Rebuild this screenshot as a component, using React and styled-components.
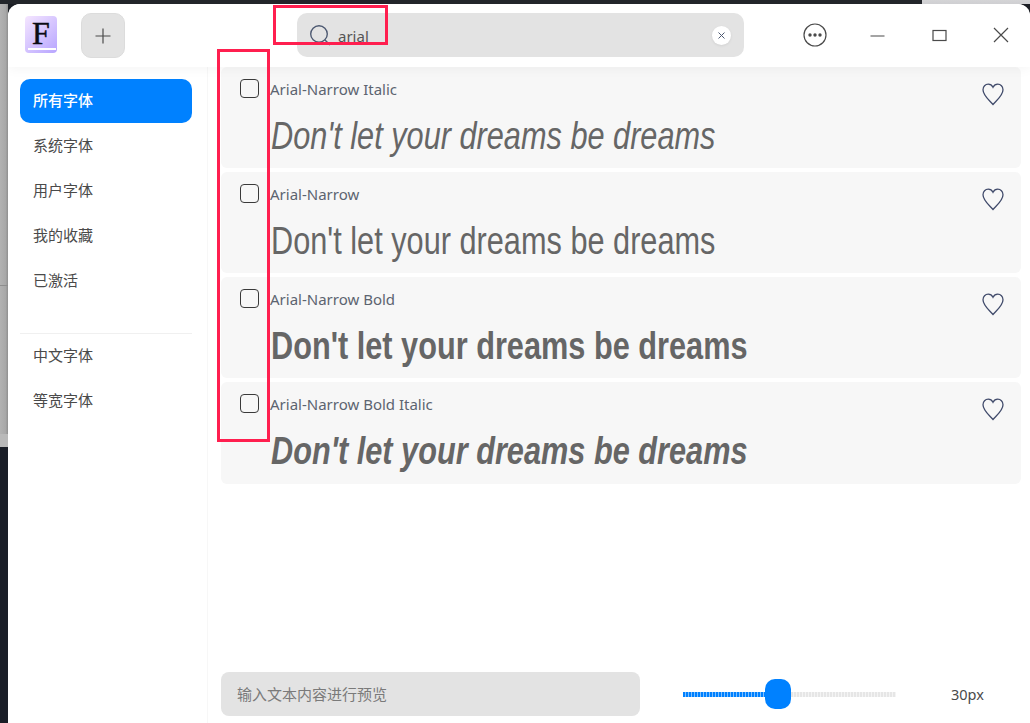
import React from 'react'
import styled, { createGlobalStyle } from 'styled-components'

const GlobalStyle = createGlobalStyle`
  html, body { margin: 0; padding: 0; height: 100%; overflow: hidden; }
  body { font-family: 'Noto Sans', 'Noto Sans CJK SC', sans-serif; background: #1b1e24; }
  * { box-sizing: border-box; }
`

const fonts = [
  { id: 1, name: 'Arial-Narrow Italic', italic: true },
  { id: 2, name: 'Arial-Narrow' },
  { id: 3, name: 'Arial-Narrow Bold', bold: true },
  { id: 4, name: 'Arial-Narrow Bold Italic', bold: true, italic: true },
]

export default function App() {
  return (
    <Page>
      <GlobalStyle />
      <Window>
        <TitleBar>
          <Logo>
            <LogoLetter>F</LogoLetter>
          </Logo>
          <AddButton>
            <svg width="16" height="16" viewBox="0 0 16 16" fill="none" stroke="#4a4a4a" strokeWidth="1.2">
              <path d="M8 0.5V15.5M0.5 8H15.5" />
            </svg>
          </AddButton>
          <SearchBox>
            <svg width="23" height="23" viewBox="0 0 23 23" fill="none" stroke="#4e5a72" strokeWidth="1.4">
              <circle cx="10" cy="10" r="8.3" />
              <path d="M16 16L21 21" />
            </svg>
            <SearchText>arial</SearchText>
            <ClearButton>
              <svg width="7" height="7" viewBox="0 0 7 7" fill="none" stroke="#4e5a72" strokeWidth="1">
                <path d="M0.5 0.5L6.5 6.5M6.5 0.5L0.5 6.5" />
              </svg>
            </ClearButton>
          </SearchBox>
          <WindowButtons>
            <WindowButton>
              <svg width="24" height="24" viewBox="0 0 24 24" fill="none">
                <circle cx="12" cy="12" r="11" stroke="#4a4a4a" strokeWidth="1.2" />
                <circle cx="7" cy="12" r="1.7" fill="#4a4a4a" />
                <circle cx="12" cy="12" r="1.7" fill="#4a4a4a" />
                <circle cx="17" cy="12" r="1.7" fill="#4a4a4a" />
              </svg>
            </WindowButton>
            <WindowButton>
              <svg width="15" height="15" viewBox="0 0 15 15" fill="none" stroke="#4a4a4a" strokeWidth="1.2">
                <path d="M0.5 8H14.5" />
              </svg>
            </WindowButton>
            <WindowButton>
              <svg width="15" height="15" viewBox="0 0 15 15" fill="none" stroke="#4a4a4a" strokeWidth="1.2">
                <rect x="1" y="2.5" width="13" height="10" />
              </svg>
            </WindowButton>
            <WindowButton>
              <svg width="16" height="16" viewBox="0 0 16 16" fill="none" stroke="#4a4a4a" strokeWidth="1.2">
                <path d="M1 1L15 15M15 1L1 15" />
              </svg>
            </WindowButton>
          </WindowButtons>
        </TitleBar>
        <Body>
          <Sidebar>
            <NavItem $active>所有字体</NavItem>
            <NavItem>系统字体</NavItem>
            <NavItem>用户字体</NavItem>
            <NavItem>我的收藏</NavItem>
            <NavItem>已激活</NavItem>
            <NavDivider />
            <NavItem>中文字体</NavItem>
            <NavItem>等宽字体</NavItem>
          </Sidebar>
          <Main>
            <FontList>
              {fonts.map((f) => (
                <FontRow key={f.id}>
                  <CheckBox />
                  <FontInfo>
                    <FontName>{f.name}</FontName>
                    <Preview $bold={f.bold} $italic={f.italic}>Don't let your dreams be dreams</Preview>
                  </FontInfo>
                  <HeartIcon width="24" height="24" viewBox="0 0 24 24" fill="none" stroke="#414b6b" strokeWidth="1.3">
                    <path d="M12 22.5C8 18 2 13.5 2 7.8C2 4.5 4.4 2.2 7.2 2.2C9.2 2.2 11 3.3 12 5.3C13 3.3 14.8 2.2 16.8 2.2C19.6 2.2 22 4.5 22 7.8C22 13.5 16 18 12 22.5Z" />
                  </HeartIcon>
                </FontRow>
              ))}
            </FontList>
            <Footer>
              <PreviewInput>输入文本内容进行预览</PreviewInput>
              <Slider>
                <SliderFill />
                <SliderThumb />
                <SliderRest />
              </Slider>
              <SizeLabel>30px</SizeLabel>
            </Footer>
          </Main>
        </Body>
      </Window>
      <SearchMark />
      <ListMark />
    </Page>
  )
}

const Page = styled.div`
  position: relative;
  width: 1030px;
  height: 723px;
  overflow: hidden;
  padding: 4px 0 0 8px;
  background:
    linear-gradient(#22252a, #22252a) 0 0 / 922px 4px no-repeat,
    linear-gradient(#d4d4d6, #cfcfd2) 922px 0 / 108px 4px no-repeat,
    linear-gradient(#8e8e8e, #8e8e8e) 0 285px / 8px 1px no-repeat,
    linear-gradient(#b9b9b9, #b9b9b9) 0 434px / 8px 13px no-repeat,
    linear-gradient(#1a1e27, #1a1e27) 0 447px / 8px 276px no-repeat,
    linear-gradient(90deg, #b2b2b2, #a8a8a8 70%, #8f8f8f) 0 0 / 8px 447px no-repeat;
`

const Window = styled.div`
  width: 1022px;
  height: 719px;
  display: flex;
  flex-direction: column;
  background: #fff;
  border-radius: 12px 12px 0 0;
  overflow: hidden;
`

const TitleBar = styled.div`
  position: relative;
  z-index: 1;
  height: 63px;
  flex: none;
  display: flex;
  align-items: flex-start;
  padding: 9px 0 0 17px;
  background: #fff;
  box-shadow: 0 1px 12px rgba(0, 0, 0, 0.05);
`

const Logo = styled.div`
  position: relative;
  width: 32px;
  height: 37px;
  flex: none;
  margin-top: 3px;
  display: flex;
  justify-content: center;
  border-radius: 4px;
  background: linear-gradient(135deg, #f5e6ff, #b7a5ff);
  &::after {
    content: '';
    position: absolute;
    left: 3px;
    right: 1px;
    bottom: 3px;
    height: 2px;
    background: #fff;
  }
`

const LogoLetter = styled.span`
  font-family: 'Liberation Serif', serif;
  font-weight: 400;
  font-size: 32px;
  line-height: 34px;
  color: #0c0c14;
  -webkit-text-stroke: 0.5px #0c0c14;
`

const AddButton = styled.div`
  width: 44px;
  height: 45px;
  flex: none;
  margin-left: 24px;
  display: flex;
  align-items: center;
  justify-content: center;
  background: #e3e3e3;
  border: 1px solid #dcdcdc;
  border-radius: 10px;
`

const SearchBox = styled.div`
  width: 447px;
  height: 44px;
  flex: none;
  margin-left: 172px;
  display: flex;
  align-items: center;
  padding: 0 13px 0 12px;
  background: #e3e3e3;
  border-radius: 10px;
`

const SearchText = styled.span`
  margin-left: 6px;
  padding-top: 2px;
  font-size: 15px;
  color: #555;
`

const ClearButton = styled.div`
  width: 19px;
  height: 19px;
  margin-left: auto;
  display: flex;
  align-items: center;
  justify-content: center;
  background: #fff;
  border-radius: 50%;
  box-shadow: 0 1px 3px rgba(0, 0, 0, 0.08);
`

const WindowButtons = styled.div`
  margin-left: 40px;
  flex: none;
  display: flex;
`

const WindowButton = styled.div`
  width: 62px;
  height: 44px;
  display: flex;
  align-items: center;
  justify-content: center;
`

const Body = styled.div`
  flex: 1;
  min-height: 0;
  display: flex;
`

const Sidebar = styled.div`
  width: 200px;
  flex: none;
  padding: 12px 15px 0 12px;
  display: flex;
  flex-direction: column;
  gap: 1px;
  border-right: 1px solid #f7f7f7;
`

const NavItem = styled.div`
  height: 44px;
  flex: none;
  display: flex;
  align-items: center;
  padding: 0 0 4px 13px;
  border-radius: 10px;
  font-size: 15px;
  font-weight: ${(p) => (p.$active ? 500 : 400)};
  color: ${(p) => (p.$active ? '#fff' : '#4a4a4a')};
  background: ${(p) => (p.$active ? '#0081ff' : 'transparent')};
`

const NavDivider = styled.div`
  height: 1px;
  flex: none;
  margin: 29px 0 -1px;
  background: #f0f0f0;
`

const Main = styled.div`
  flex: 1;
  min-width: 0;
  display: flex;
  flex-direction: column;
  padding: 0 9px 7px 13px;
`

const FontList = styled.div`
  display: flex;
  flex-direction: column;
  gap: 4px;
`

const FontRow = styled.div`
  position: relative;
  height: 101px;
  display: flex;
  padding: 12px 16px 0 19px;
  background: #f7f7f7;
  border-radius: 6px;
  &:last-child {
    height: 102px;
  }
`

const CheckBox = styled.div`
  width: 19px;
  height: 19px;
  flex: none;
  border: 1.5px solid #3a3a3a;
  border-radius: 4px;
`

const FontInfo = styled.div`
  flex: 1;
  min-width: 0;
  margin-left: 11px;
`

const FontName = styled.div`
  font-size: 15px;
  line-height: 20px;
  color: #5c6470;
`

const Preview = styled.div`
  margin-top: 13px;
  margin-left: 1px;
  font-family: 'Liberation Sans', sans-serif;
  font-size: 38px;
  line-height: 48px;
  white-space: nowrap;
  color: #666;
  font-weight: ${(p) => (p.$bold ? 700 : 400)};
  font-style: ${(p) => (p.$italic ? 'italic' : 'normal')};
  transform: scaleX(0.808);
  transform-origin: left center;
`

const HeartIcon = styled.svg`
  flex: none;
  margin-top: 3px;
`

const Footer = styled.div`
  margin-top: auto;
  display: flex;
  align-items: center;
`

const PreviewInput = styled.div`
  width: 419px;
  height: 44px;
  flex: none;
  display: flex;
  align-items: center;
  padding: 0 0 2px 16px;
  background: #e3e3e3;
  border-radius: 8px;
  font-size: 15px;
  color: #7a7a7a;
`

const Slider = styled.div`
  width: 213px;
  flex: none;
  margin-left: 43px;
  display: flex;
  align-items: center;
`

const SliderFill = styled.div`
  width: 82px;
  height: 5px;
  background: repeating-linear-gradient(90deg, #0081ff 0 2px, #7fc0ff 2px 3px);
`

const SliderThumb = styled.div`
  width: 26px;
  height: 30px;
  flex: none;
  background: #0081ff;
  border-radius: 10px;
`

const SliderRest = styled.div`
  flex: 1;
  height: 5px;
  background: repeating-linear-gradient(90deg, #e6e6e6 0 2px, #f4f4f4 2px 3px);
`

const SizeLabel = styled.div`
  margin-left: 55px;
  font-size: 14.5px;
  color: #4a4a4a;
`

const SearchMark = styled.div`
  position: absolute;
  z-index: 2;
  left: 273px;
  top: 5px;
  width: 115px;
  height: 40px;
  border: 3px solid #ff1f4f;
`

const ListMark = styled.div`
  position: absolute;
  z-index: 2;
  left: 217px;
  top: 49px;
  width: 53px;
  height: 393px;
  border: 3px solid #ff1f4f;
`
